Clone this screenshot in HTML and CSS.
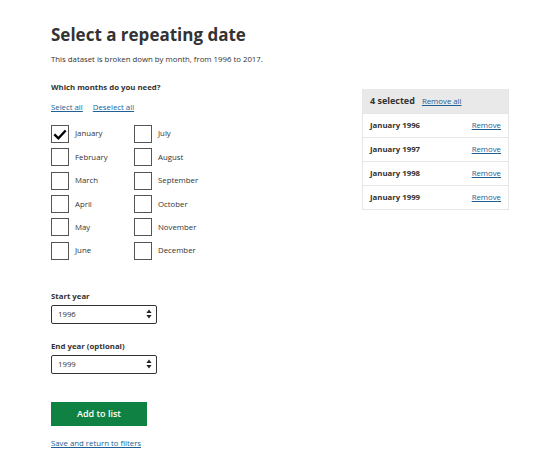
FILE: index.html
```html
<!DOCTYPE html>
<html lang="en">
<head>
<meta charset="utf-8">
<title>Select a repeating date</title>
<link rel="stylesheet" href="styles.css">
</head>
<body>
<div class="page">
  <main class="main">
    <h1 class="title">Select a repeating date</h1>
    <p class="intro">This dataset is broken down by month, from 1996 to 2017.</p>
    <fieldset class="months">
      <legend class="label">Which months do you need?</legend>
      <div class="bulk"><a href="#">Select all</a><a href="#">Deselect all</a></div>
      <div class="grid">
        <label class="check"><span class="box on"><svg viewBox="0 0 18 18" width="18" height="18"><path d="M3.5 9.2 L7.2 12.8 L14.5 4.8" fill="none" stroke="#000" stroke-width="2.6" stroke-linecap="square"/></svg></span>January</label>
        <label class="check"><span class="box"></span>July</label>
        <label class="check"><span class="box"></span>February</label>
        <label class="check"><span class="box"></span>August</label>
        <label class="check"><span class="box"></span>March</label>
        <label class="check"><span class="box"></span>September</label>
        <label class="check"><span class="box"></span>April</label>
        <label class="check"><span class="box"></span>October</label>
        <label class="check"><span class="box"></span>May</label>
        <label class="check"><span class="box"></span>November</label>
        <label class="check"><span class="box"></span>June</label>
        <label class="check"><span class="box"></span>December</label>
      </div>
    </fieldset>
    <div class="field first">
      <div class="label">Start year</div>
      <div class="select"><span>1996</span><svg class="arrows" viewBox="0 0 6 10" width="6" height="10"><path d="M3 0.5 L5.6 4 L0.4 4 Z M3 9.5 L5.6 6 L0.4 6 Z" fill="#222"/></svg></div>
    </div>
    <div class="field">
      <div class="label">End year (optional)</div>
      <div class="select"><span>1999</span><svg class="arrows" viewBox="0 0 6 10" width="6" height="10"><path d="M3 0.5 L5.6 4 L0.4 4 Z M3 9.5 L5.6 6 L0.4 6 Z" fill="#222"/></svg></div>
    </div>
    <button class="btn">Add to list</button>
    <a class="save" href="#">Save and return to filters</a>
  </main>
  <aside class="panel">
    <div class="panel-head"><strong>4 selected</strong><a href="#">Remove all</a></div>
    <div class="row"><strong>January 1996</strong><a href="#">Remove</a></div>
    <div class="row"><strong>January 1997</strong><a href="#">Remove</a></div>
    <div class="row"><strong>January 1998</strong><a href="#">Remove</a></div>
    <div class="row"><strong>January 1999</strong><a href="#">Remove</a></div>
  </aside>
</div>
</body>
</html>
```
FILE: styles.css
```css
* { box-sizing: border-box; }
html, body { margin: 0; background: #fff; }
body {
  font-family: "Open Sans", "Liberation Sans", sans-serif;
  color: #333;
  font-size: 7.8px;
  line-height: 1.4;
}
a { color: #206095; text-decoration: underline; }
.page {
  display: flex;
  padding: 0 0 0 51px;
  width: 547px;
}
.main { width: 311px; padding-top: 22px; }
.title {
  margin: 0;
  font-size: 17px;
  font-weight: 700;
  line-height: 26px;
  color: #333;
}
.intro { margin: 6px 0 0; font-size: 7.8px; }
.months { border: 0; margin: 17px 0 0; padding: 0; }
.label { font-weight: 700; font-size: 7.8px; padding: 0; line-height: 11px; }
.bulk { margin-top: 9px; display: flex; gap: 10px; font-size: 7.8px; }
.grid {
  margin-top: 12px;
  display: grid;
  grid-template-columns: 83px 120px;
  row-gap: 5.4px;
}
.check { display: flex; align-items: center; gap: 6px; font-size: 7.8px; height: 18px; }
.box {
  width: 18px; height: 18px;
  border: 1px solid #555;
  display: inline-flex;
  flex: none;
}
.field.first { margin-top: 31px; }
.field { margin-top: 17px; }
.select {
  margin-top: 3px;
  width: 106px; height: 19px;
  border: 1px solid #333;
  border-radius: 2px;
  display: flex; align-items: center; justify-content: space-between;
  padding: 0 4px 0 6px;
  font-size: 7.8px;
}
.btn {
  display: block;
  margin-top: 28px;
  width: 96px; height: 24px;
  background: #0f8243;
  color: #fff;
  border: 0;
  font-family: inherit;
  font-size: 9px;
  font-weight: 600;
}
.save { display: inline-block; margin-top: 12px; font-size: 7.8px; }
.panel {
  margin-top: 89px;
  align-self: flex-start;
  width: 147px;
  border: 1px solid #e6e6e6;
  border-top: 0;
}
.panel-head {
  background: #e9e9e9;
  height: 24px;
  display: flex; align-items: center; gap: 7px;
  padding: 0 7px;
  font-size: 9px;
}
.panel-head a { font-size: 7.8px; }
.row {
  height: 24px;
  display: flex; align-items: center; justify-content: space-between;
  padding: 0 7px;
  font-size: 7.8px;
  border-top: 1px solid #e6e6e6;
}
```
